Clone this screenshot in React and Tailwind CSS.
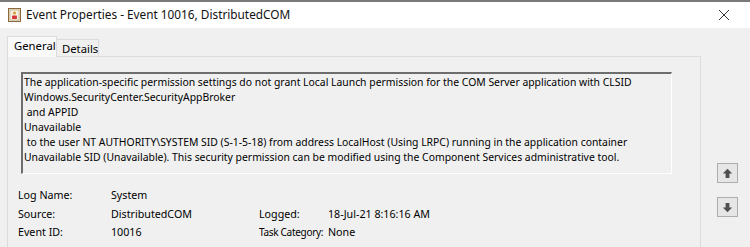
import React from "react";

function TitleIcon() {
  return (
    <svg width="13" height="14" viewBox="0 0 13 14">
      <rect x="0.5" y="0.5" width="12" height="13" fill="#e9e2cf" stroke="#8a6a3a" />
      <rect x="2" y="2" width="9" height="10" fill="#f5f1e6" stroke="#b59a6a" strokeWidth="0.6" />
      <circle cx="6.5" cy="5" r="1.6" fill="#d5a03a" />
      <rect x="4" y="7.5" width="5" height="3.5" rx="0.8" fill="#d9343a" />
    </svg>
  );
}

function ArrowButton({ down }) {
  return (
    <div className="w-[21px] h-[20px] border border-[#adadad] bg-[#e6e6e6] flex items-center justify-center">
      <svg width="11" height="11" viewBox="0 0 11 11" style={{ transform: down ? "rotate(180deg)" : undefined }}>
        <path d="M5.5 0.8 L10.2 5.6 L7.4 5.6 L7.4 10 L3.6 10 L3.6 5.6 L0.8 5.6 Z" fill="#505050" />
      </svg>
    </div>
  );
}

export default function App() {
  const font = { fontFamily: '"Noto Sans", "Open Sans", sans-serif' };
  return (
    <div className="w-[750px] h-[247px] bg-[#f0f0f0] overflow-hidden text-black" style={font}>
      <div className="h-[28px] bg-white border-t-2 border-[#7a7a7a] flex items-center pl-[8px] pr-[20px]">
        <TitleIcon />
        <span className="ml-[5px] text-[11.8px] leading-none text-[#111] whitespace-nowrap">Event Properties - Event 10016, DistributedCOM</span>
        <span className="ml-auto">
          <svg width="12" height="12" viewBox="0 0 12 12">
            <path d="M1 1 L11 11 M11 1 L1 11" stroke="#333" strokeWidth="1" />
          </svg>
        </span>
      </div>
      <div className="flex">
        <div className="ml-[7px] w-[694px]">
          <div className="flex items-end h-[28px]">
            <div className="h-[21px] w-[50px] bg-[#f9f9f9] border border-b-0 border-[#dcdcdc] text-[11.3px] leading-[18px] pl-[6px] relative z-10 mb-[-1px]">General</div>
            <div className="h-[17px] w-[42px] border-t border-r border-[#dcdcdc] text-[11.3px] leading-[18px] pl-[5px]">Details</div>
          </div>
          <div className="border border-[#dcdcdc] h-[200px] pt-[15px] pl-[13px]">
            <div className="w-[651px] h-[102px] overflow-hidden border-t-2 border-l-2 border-t-[#6d6d6d] border-l-[#6d6d6d] border-b border-r border-b-white border-r-white bg-[#f0f0f0] pl-[1px] pt-[1px] text-[10.4px] leading-[15px] whitespace-nowrap">
              <div>The application-specific permission settings do not grant Local Launch permission for the COM Server application with CLSID</div>
              <div>Windows.SecurityCenter.SecurityAppBroker</div>
              <div>&nbsp;and APPID</div>
              <div>Unavailable</div>
              <div>&nbsp;to the user NT AUTHORITY\SYSTEM SID (S-1-5-18) from address LocalHost (Using LRPC) running in the application container</div>
              <div>Unavailable SID (Unavailable). This security permission can be modified using the Component Services administrative tool.</div>
            </div>
            <div className="mt-[12px] -ml-[3px] grid grid-cols-[93px_148px_69px_auto] text-[10.7px] leading-[18.5px] whitespace-nowrap">
              <div>Log Name:</div>
              <div>System</div>
              <div></div>
              <div></div>
              <div>Source:</div>
              <div>DistributedCOM</div>
              <div>Logged:</div>
              <div>18-Jul-21 8:16:16 AM</div>
              <div>Event ID:</div>
              <div>10016</div>
              <div className="text-[10px] tracking-[-0.3px]">Task Category:</div>
              <div>None</div>
            </div>
          </div>
        </div>
        <div className="ml-[16px] pt-[135px] flex flex-col gap-[14px]">
          <ArrowButton />
          <ArrowButton down />
        </div>
      </div>
    </div>
  );
}
